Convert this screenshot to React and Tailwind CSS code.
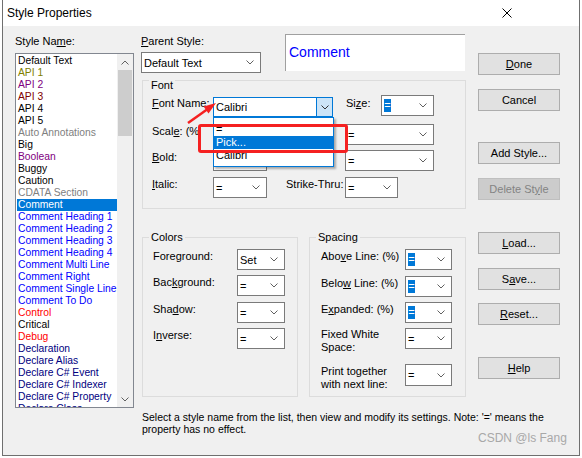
import React from 'react';

const items = [
  ['Default Text', 'text-black'],
  ['API 1', 'text-[#808000]'],
  ['API 2', 'text-[#800080]'],
  ['API 3', 'text-[#800000]'],
  ['API 4', 'text-black'],
  ['API 5', 'text-black'],
  ['Auto Annotations', 'text-[#808080]'],
  ['Big', 'text-black'],
  ['Boolean', 'text-[#800080]'],
  ['Buggy', 'text-black'],
  ['Caution', 'text-black'],
  ['CDATA Section', 'text-[#808080]'],
  ['Comment', 'sel'],
  ['Comment Heading 1', 'text-[#0000ff]'],
  ['Comment Heading 2', 'text-[#0000ff]'],
  ['Comment Heading 3', 'text-[#0000ff]'],
  ['Comment Heading 4', 'text-[#0000ff]'],
  ['Comment Multi Line', 'text-[#0000ff]'],
  ['Comment Right', 'text-[#0000ff]'],
  ['Comment Single Line', 'text-[#0000ff]'],
  ['Comment To Do', 'text-[#0000ff]'],
  ['Control', 'text-[#ff0000]'],
  ['Critical', 'text-black'],
  ['Debug', 'text-[#ff0000]'],
  ['Declaration', 'text-[#000080]'],
  ['Declare Alias', 'text-[#000080]'],
  ['Declare C# Event', 'text-[#000080]'],
  ['Declare C# Indexer', 'text-[#000080]'],
  ['Declare C# Property', 'text-[#000080]'],
  ['Declare Class', 'text-[#000080]'],
];

const Chevron = ({ className = '', color = '#606060' }) => (
  <svg width="8" height="5" viewBox="0 0 8 5" className={'shrink-0 ' + className}>
    <path d="M0.5 0.5 L4 4 L7.5 0.5" fill="none" stroke={color} strokeWidth="1" />
  </svg>
);

const Combo = ({ className = '', text, hl }) => (
  <div className={'flex items-center bg-white border border-[#7a7a7a] shrink-0 ' + className}>
    <div className="flex-1 flex items-center pl-[2px] overflow-hidden whitespace-nowrap">
      {hl ? (
        <span className="bg-[#0078d7] text-white w-[7px] h-[13px] leading-[13px] text-center">=</span>
      ) : (
        <span>{text}</span>
      )}
    </div>
    <Chevron className="mr-[6px]" />
  </div>
);

const Btn = ({ className = '', children, disabled }) => (
  <div
    className={
      'w-[82px] h-[22px] flex items-center justify-center border ' +
      (disabled ? 'bg-[#cccccc] border-[#bfbfbf] text-[#838383] ' : 'bg-[#e1e1e1] border-[#adadad] ') +
      className
    }
  >
    {children}
  </div>
);

const U = ({ children }) => <span className="underline underline-offset-[1px]">{children}</span>;

const App = () => {
  return (
    <div className="relative w-[582px] h-[458px] bg-white overflow-hidden font-['Liberation_Sans',Arial,sans-serif] text-[11px] leading-[12px] text-black">
      <div className="ml-[2px] w-[578px] h-[456px] border-x border-b border-[#6f6f6f] flex flex-col">
        {/* title bar */}
        <div className="h-[26px] bg-white flex items-center shrink-0">
          <span className="pl-[4px] text-[12px]">Style Properties</span>
          <svg width="10" height="10" viewBox="0 0 10 10" className="ml-auto mr-[67px]">
            <path d="M0.5 0.5 L9.5 9.5 M9.5 0.5 L0.5 9.5" stroke="#000" strokeWidth="1" />
          </svg>
        </div>

        <div className="flex-1 bg-[#f0f0f0] flex">
          {/* style list */}
          <div className="flex flex-col pt-[9px] pl-[12px]">
            <div className="h-[12px]">
              Style Na<U>m</U>e:
            </div>
            <div className="mt-[6px] w-[119px] h-[355px] border border-[#828790] bg-white flex overflow-hidden">
              <div className="w-[101px] pt-[1px] text-[10.3px]">
                {items.map(([name, c]) => (
                  <div
                    key={name}
                    className={
                      'h-[12px] leading-[12px] ml-[1px] pl-[1px] whitespace-nowrap ' +
                      (c === 'sel' ? 'bg-[#0078d7] text-white' : c)
                    }
                  >
                    {name}
                  </div>
                ))}
              </div>
              <div className="w-[16px] bg-[#f0f0f0] flex flex-col">
                <div className="h-[16px] flex items-center justify-center">
                  <svg width="8" height="5" viewBox="0 0 8 5">
                    <path d="M0.5 4.5 L4 1 L7.5 4.5" fill="none" stroke="#606060" strokeWidth="1" />
                  </svg>
                </div>
                <div className="mx-[1px] h-[66px] bg-[#cdcdcd]" />
                <div className="flex-1" />
                <div className="h-[16px] flex items-center justify-center">
                  <Chevron />
                </div>
              </div>
            </div>
          </div>

          {/* middle */}
          <div className="ml-[7px] w-[325px] flex flex-col pt-[9px]">
            <div className="flex items-start">
              <div className="w-[120px] flex flex-col">
                <div className="h-[12px]">
                  <U>P</U>arent Style:
                </div>
                <Combo className="mt-[5px] w-[120px] h-[21px]" text="Default Text" />
              </div>
              <div className="ml-[24px] -mt-[1px] w-[180px] h-[37px] bg-white border-t border-l border-[#a0a0a0] border-r-[#f0f0f0] border-b-[#f0f0f0] flex items-center pl-[3px] pb-[2px]">
                <span className="text-[14px] text-[#0000ff] leading-[16px]">Comment</span>
              </div>
            </div>

            {/* font group */}
            <div className="relative mt-[7px] ml-[1px] w-[324px] h-[129px] border border-[#dcdcdc] flex flex-col pl-[9px]">
              <span className="absolute -top-[2px] left-[6px] px-[2px] bg-[#f0f0f0]">Font</span>
              <div className="mt-[14px] h-[21px] flex items-start">
                <div className="w-[61px] mt-[2px]">
                  <U>F</U>ont Name:
                </div>
                <div className="mt-[2px] w-[120px] h-[20px] bg-white border border-[#0078d7] flex items-center">
                  <span className="flex-1 pl-[2px]">Calibri</span>
                  <div className="w-[16px] h-full bg-[#cce4f7] border-l border-[#0078d7] flex items-center justify-center">
                    <Chevron color="#333333" />
                  </div>
                </div>
                <div className="ml-[13px] w-[35px] mt-[2px]">
                  Si<U>z</U>e:
                </div>
                <Combo className="w-[53px] h-[21px]" hl />
              </div>
              <div className="mt-[8px] h-[21px] flex items-start">
                <div className="w-[61px] mt-[1px] whitespace-nowrap overflow-hidden">
                  Scal<U>e</U>: (%
                </div>
                <Combo className="w-[54px] h-[21px]" text="" />
                <div className="ml-[19px] w-[59px]" />
                <Combo className="w-[89px] h-[21px]" text="=" />
              </div>
              <div className="mt-[5px] h-[21px] flex items-start">
                <div className="w-[61px] mt-[1px]">
                  <U>B</U>old:
                </div>
                <Combo className="w-[54px] h-[21px]" text="" />
                <div className="ml-[19px] w-[59px]" />
                <Combo className="w-[89px] h-[21px]" text="=" />
              </div>
              <div className="mt-[6px] h-[21px] flex items-start">
                <div className="w-[61px] mt-[1px]">
                  <U>I</U>talic:
                </div>
                <Combo className="w-[54px] h-[21px]" text="=" />
                <div className="ml-[19px] w-[59px] mt-[1px]">Strike-Thru:</div>
                <Combo className="w-[53px] h-[21px]" text="=" />
              </div>
            </div>

            {/* colors + spacing */}
            <div className="mt-[28px] flex">
              <div className="relative ml-[1px] w-[156px] h-[160px] border border-[#dcdcdc] flex flex-col pl-[10px]">
                <span className="absolute -top-[7px] left-[6px] px-[2px] bg-[#f0f0f0]">Colors</span>
                {[
                  ['mt-[11px]', <>Fore<U>g</U>round:</>, 'Set'],
                  ['mt-[5px]', <>Bac<U>k</U>ground:</>, '='],
                  ['mt-[6px]', <>Sha<U>d</U>ow:</>, '='],
                  ['mt-[5px]', <>I<U>n</U>verse:</>, '='],
                ].map(([m, label, v], i) => (
                  <div key={i} className={'flex items-start h-[21px] ' + m}>
                    <div className="w-[84px] mt-[1px]">{label}</div>
                    <Combo className="w-[48px] h-[21px]" text={v} />
                  </div>
                ))}
              </div>

              <div className="relative ml-[11px] w-[157px] h-[160px] border border-[#dcdcdc] flex flex-col pl-[11px]">
                <span className="absolute -top-[7px] left-[6px] px-[2px] bg-[#f0f0f0]">Spacing</span>
                <div className="mt-[11px] flex items-start h-[21px]">
                  <div className="w-[84px] mt-[1px] whitespace-nowrap">
                    Abo<U>v</U>e Line: (%)
                  </div>
                  <Combo className="w-[47px] h-[21px]" hl />
                </div>
                <div className="mt-[6px] flex items-start h-[21px]">
                  <div className="w-[84px] mt-[1px] whitespace-nowrap">
                    Belo<U>w</U> Line: (%)
                  </div>
                  <Combo className="w-[47px] h-[21px]" hl />
                </div>
                <div className="mt-[5px] flex items-start h-[21px]">
                  <div className="w-[84px] mt-[1px] whitespace-nowrap">
                    E<U>x</U>panded: (%)
                  </div>
                  <Combo className="w-[47px] h-[21px]" hl />
                </div>
                <div className="mt-[5px] flex items-start h-[21px]">
                  <div className="w-[84px] leading-[13px]">
                    Fixed White
                    <br />
                    Space:
                  </div>
                  <Combo className="w-[47px] h-[21px]" text="=" />
                </div>
                <div className="mt-[15px] flex items-start h-[22px]">
                  <div className="w-[84px] mt-[1px] leading-[13px] whitespace-nowrap">
                    Print together
                    <br />
                    with next line:
                  </div>
                  <Combo className="w-[47px] h-[22px]" text="=" />
                </div>
              </div>
            </div>

            <div className="mt-[14px] ml-[1px] text-[10.5px] leading-[12px] whitespace-nowrap">
              Select a style name from the list, then view and modify its settings. Note: '=' means the
              <br />
              property has no effect.
            </div>
          </div>

          {/* buttons */}
          <div className="ml-[12px] flex flex-col">
            <Btn className="mt-[27px]">
              <U>D</U>one
            </Btn>
            <Btn className="mt-[14px]">Cancel</Btn>
            <Btn className="mt-[31px]">Add Style...</Btn>
            <Btn className="mt-[14px]" disabled>
              Delete St<U>y</U>le
            </Btn>
            <Btn className="mt-[32px]">
              <U>L</U>oad...
            </Btn>
            <Btn className="mt-[14px]">
              S<U>a</U>ve...
            </Btn>
            <Btn className="mt-[13px]">
              <U>R</U>eset...
            </Btn>
            <Btn className="mt-[32px]">
              <U>H</U>elp
            </Btn>
          </div>
        </div>
      </div>

      {/* open font-name dropdown */}
      <div className="absolute left-[213px] top-[117px] w-[121px] bg-white border border-[#0078d7] pt-[5px] pb-[4px] shadow-[2px_2px_2px_rgba(0,0,0,0.3)]">
        <div className="h-[13px] leading-[13px] pl-[2px]">=</div>
        <div className="h-[13px] leading-[13px] pl-[2px] bg-[#0078d7] text-white">Pick...</div>
        <div className="h-[13px] leading-[13px] pl-[2px]">Calibri</div>
      </div>

      {/* annotation */}
      <div className="absolute left-[198px] top-[124px] w-[150px] h-[29px] border-[3px] border-[#f52020] rounded-[3px]" />
      <svg className="absolute left-[180px] top-[95px]" width="45" height="35" viewBox="0 0 45 35">
        <line x1="8" y1="28" x2="27" y2="14.5" stroke="#f52020" strokeWidth="2.5" />
        <polygon points="36,8 28.5,18.6 23.6,11.6" fill="#f52020" />
      </svg>

      <div className="absolute left-[478px] top-[431px] text-[12px] leading-[14px] text-[#a8a8a8]">CSDN @ls Fang</div>
    </div>
  );
};

export default App;
